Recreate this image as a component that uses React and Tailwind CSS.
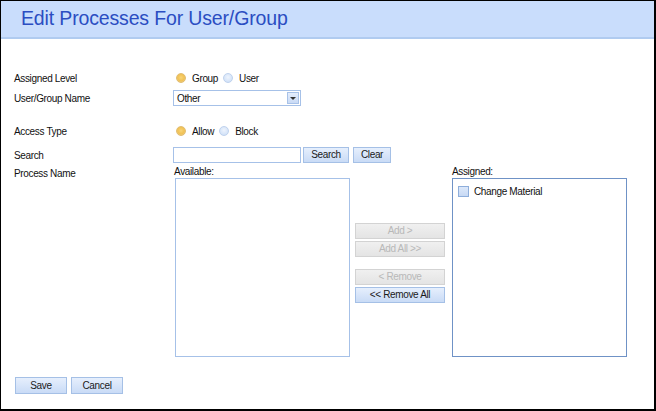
const font = { fontFamily: '"Liberation Sans", Arial, sans-serif' };

function Radio({ checked, label }) {
  return (
    <label className="flex items-center">
      <span
        className={
          checked
            ? "w-[10px] h-[10px] rounded-full border border-[#e2bd70] bg-[radial-gradient(circle_at_50%_45%,#f8d478_0%,#f1c255_55%,#e8d4a8_100%)]"
            : "w-[10px] h-[10px] rounded-full border border-[#bfd2ee] bg-[radial-gradient(circle_at_50%_40%,#eef4fd_0%,#d4e3f8_70%,#c6d8f2_100%)]"
        }
      />
      <span className="ml-[6px] mr-[5px]">{label}</span>
    </label>
  );
}

function Btn({ children, className = "", disabled = false }) {
  return (
    <button
      className={
        (disabled
          ? "border border-[#d3d3d3] bg-[linear-gradient(#f0f0f0,#e4e4e4)] text-[#b8b8b8] "
          : "border border-[#a5c0e6] bg-[linear-gradient(#e6effd,#c9dbf6)] text-[#1a1a1a] ") +
        "h-[16px] flex items-center justify-center leading-none " +
        className
      }
    >
      {children}
    </button>
  );
}

export default function App() {
  return (
    <div
      style={font}
      className="w-[656px] h-[411px] bg-white border-l border-t border-r-2 border-b-2 border-black flex flex-col text-[10px] tracking-[-0.35px] text-[#111]"
    >
      {/* Header */}
      <div className="h-[38px] shrink-0 bg-[#c9ddfc] border-b-2 border-[#b0cbf0] flex items-center pl-[20px]">
        <h1 className="text-[19.5px] text-[#2b4dc2] tracking-[-0.15px]">Edit Processes For User/Group</h1>
      </div>

      <div className="pl-[13px] flex flex-col">
        {/* Assigned level */}
        <div className="mt-[31px] h-[16px] flex items-center">
          <div className="w-[159px]">Assigned Level</div>
          <div className="flex items-center pl-[3px]">
            <Radio checked label="Group" />
            <Radio label="User" />
          </div>
        </div>

        {/* User/Group name */}
        <div className="mt-[4px] h-[16px] flex items-center">
          <div className="w-[159px]">User/Group Name</div>
          <div className="w-[128px] h-[16px] border border-[#a6c1e8] flex items-center justify-between pl-[3px] pr-[1px]">
            <span>Other</span>
            <span className="w-[12px] h-[12px] border border-[#a8c2e8] bg-[linear-gradient(#e4edfc,#c9daf5)] flex items-center justify-center">
              <span className="w-0 h-0 border-l-[3px] border-r-[3px] border-t-[3px] border-l-transparent border-r-transparent border-t-[#333]" />
            </span>
          </div>
        </div>

        {/* Access type */}
        <div className="mt-[17px] h-[16px] flex items-center">
          <div className="w-[159px]">Access Type</div>
          <div className="flex items-center pl-[3px]">
            <Radio checked label="Allow" />
            <Radio label="Block" />
          </div>
        </div>

        {/* Search */}
        <div className="mt-[8px] h-[16px] flex items-center">
          <div className="w-[159px]">Search</div>
          <div className="w-[128px] h-[16px] border border-[#a6c1e8]" />
          <Btn className="ml-[2px] w-[46px]">Search</Btn>
          <Btn className="ml-[4px] w-[38px]">Clear</Btn>
        </div>

        {/* Process lists */}
        <div className="mt-[2px] flex">
          <div className="w-[160px] pt-[1px]">Process Name</div>
          <div className="flex flex-col">
            <div className="h-[13px] leading-[13px]">Available:</div>
            <div className="w-[175px] h-[179px] border border-[#a6c1e8] ml-[1px]" />
          </div>
          <div className="ml-[5px] w-[90px] flex flex-col gap-[2px] pt-[58px]">
            <Btn disabled className="w-full">Add &gt;</Btn>
            <Btn disabled className="w-full">Add All &gt;&gt;</Btn>
            <Btn disabled className="w-full mt-[10px]">&lt; Remove</Btn>
            <Btn className="w-full">&lt;&lt; Remove All</Btn>
          </div>
          <div className="ml-[7px] flex flex-col">
            <div className="h-[13px] leading-[13px]">Assigned:</div>
            <div className="w-[175px] h-[179px] border border-[#6f92c6] px-[5px] pt-[5px]">
              <div className="flex items-center">
                <span className="w-[11px] h-[11px] border border-[#8eaedb] bg-[linear-gradient(#dce8fa,#c7d9f4)]" />
                <span className="ml-[5px]">Change Material</span>
              </div>
            </div>
          </div>
        </div>

        {/* Footer buttons */}
        <div className="mt-[20px] flex gap-[4px] pl-[1px]">
          <Btn className="w-[52px] h-[17px]">Save</Btn>
          <Btn className="w-[52px] h-[17px]">Cancel</Btn>
        </div>
      </div>
    </div>
  );
}
